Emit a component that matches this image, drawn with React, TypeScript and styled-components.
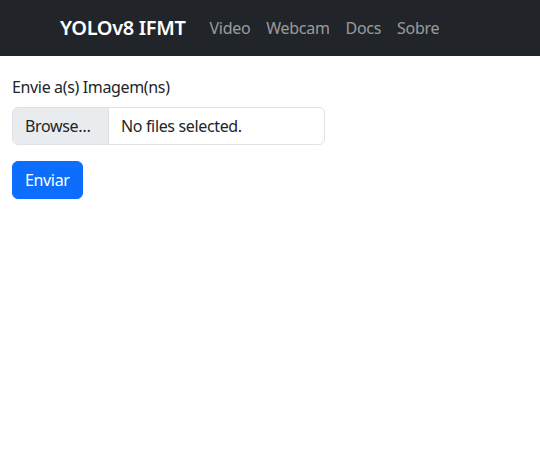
import React from "react";
import styled, { createGlobalStyle } from "styled-components";

const Global = createGlobalStyle`
  html, body { margin: 0; padding: 0; background: #fff; }
  body {
    font-family: "Noto Sans", "Open Sans", sans-serif;
    font-size: 16px;
    line-height: 1.5;
    color: #212529;
  }
  * { box-sizing: border-box; }
`;

const Navbar = styled.nav`
  height: 56px;
  background: #212529;
  display: flex;
  align-items: center;
  padding-left: 60px;
`;

const Brand = styled.a`
  font-size: 20px;
  font-weight: 600;
  color: #fff;
  text-decoration: none;
  margin-right: 16px;
  letter-spacing: -0.35px;
`;

const NavList = styled.ul`
  display: flex;
  list-style: none;
  margin: 0;
  padding: 0;
`;

const NavLink = styled.a`
  display: block;
  padding: 8px;
  color: rgba(255, 255, 255, 0.55);
  text-decoration: none;
  font-size: 16px;
  letter-spacing: -0.3px;
`;

const Main = styled.main`
  padding: 19px 12px 0;
  display: flex;
  flex-direction: column;
  align-items: flex-start;
  letter-spacing: -0.35px;
`;

const Label = styled.label`
  display: block;
  margin-bottom: 8px;
`;

const FileInput = styled.div`
  width: 313px;
  height: 38px;
  display: flex;
  border: 1px solid #dee2e6;
  border-radius: 6px;
  overflow: hidden;
`;

const BrowseBtn = styled.span`
  background: #e9ecef;
  border-right: 1px solid #dee2e6;
  padding: 0 13px 0 12px;
  width: 96px;
  display: flex;
  align-items: center;
`;

const FileText = styled.span`
  padding: 0 12px;
  display: flex;
  align-items: center;
`;

const Submit = styled.button`
  margin-top: 16px;
  height: 38px;
  padding: 0 12px;
  background: #0d6efd;
  border: 1px solid #0d6efd;
  border-radius: 6px;
  color: #fff;
  font: inherit;
  letter-spacing: inherit;
`;

export default function App() {
  return (
    <>
      <Global />
      <Navbar>
        <Brand href="#">YOLOv8 IFMT</Brand>
        <NavList>
          {["Video", "Webcam", "Docs", "Sobre"].map((l) => (
            <li key={l}>
              <NavLink href="#">{l}</NavLink>
            </li>
          ))}
        </NavList>
      </Navbar>
      <Main>
        <Label>Envie a(s) Imagem(ns)</Label>
        <FileInput>
          <BrowseBtn>Browse…</BrowseBtn>
          <FileText>No files selected.</FileText>
        </FileInput>
        <Submit>Enviar</Submit>
      </Main>
    </>
  );
}
